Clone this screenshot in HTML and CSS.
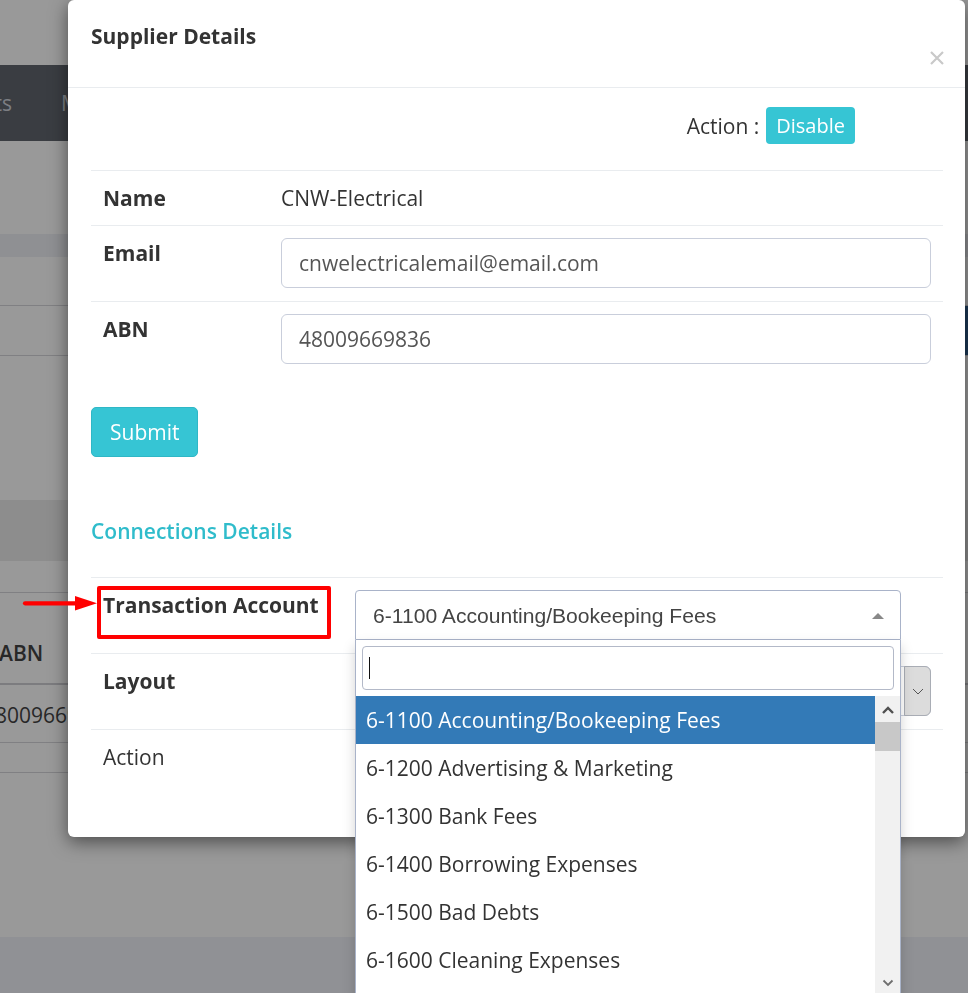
FILE: index.html
```html
<!DOCTYPE html>
<html lang="en">
<head>
<meta charset="utf-8">
<title>Supplier Details</title>
<link rel="stylesheet" href="styles.css">
</head>
<body>
<div class="page">
  <div class="bg-top"></div>
  <nav class="bg-nav">
    <div class="bg-nav-edge"><span class="bg-nav-item">Contacts</span></div>
    <span class="bg-nav-item bg-nav-next">More</span>
  </nav>
  <div class="bg-gap-a"></div>
  <div class="bg-band"></div>
  <div class="bg-gap-b"></div>
  <div class="bg-row"><span class="bg-btn"></span></div>
  <div class="bg-gap-c"></div>
  <div class="bg-card-head"></div>
  <div class="bg-gap-d"></div>
  <div class="bg-table">
    <div class="bg-th">ABN</div>
    <div class="bg-td">48009669836</div>
    <div class="bg-td-empty"></div>
  </div>
  <div class="bg-gap-e"></div>
  <div class="bg-footer"></div>
</div>

<div class="backdrop"></div>

<div class="modal">
  <div class="modal-header">
    <h5 class="modal-title">Supplier Details</h5>
    <svg class="modal-close" width="14" height="14" viewBox="0 0 14 14"><path d="M1 1L13 13M13 1L1 13" stroke="#c9c9c9" stroke-width="2.2" fill="none"/></svg>
  </div>
  <div class="modal-body">
    <div class="action-row">
      <span class="action-label">Action :</span>
      <span class="btn-disable">Disable</span>
    </div>

    <div class="detail-table">
      <div class="detail-row">
        <div class="cell cell-label">Name</div>
        <div class="cell">CNW-Electrical</div>
      </div>
      <div class="detail-row row-field">
        <div class="cell cell-label">Email</div>
        <div class="cell"><div class="form-input">cnwelectricalemail@email.com</div></div>
      </div>
      <div class="detail-row row-field">
        <div class="cell cell-label">ABN</div>
        <div class="cell"><div class="form-input">48009669836</div></div>
      </div>
    </div>

    <div class="btn-submit">Submit</div>

    <h5 class="section-title">Connections Details</h5>

    <div class="detail-table conn-table">
      <div class="detail-row row-field">
        <div class="cell cell-label"><span class="marked">Transaction Account</span></div>
        <div class="cell">
          <div class="s2">
            <div class="s2-selection">
              <span>6-1100 Accounting/Bookeeping Fees</span>
              <span class="s2-arrow"></span>
            </div>
            <div class="s2-dropdown">
              <div class="s2-search"><div class="s2-search-box"><span class="s2-caret"></span></div></div>
              <div class="s2-results">
                <ul class="s2-options">
                  <li class="s2-option is-highlighted">6-1100 Accounting/Bookeeping Fees</li>
                  <li class="s2-option">6-1200 Advertising &amp; Marketing</li>
                  <li class="s2-option">6-1300 Bank Fees</li>
                  <li class="s2-option">6-1400 Borrowing Expenses</li>
                  <li class="s2-option">6-1500 Bad Debts</li>
                  <li class="s2-option">6-1600 Cleaning Expenses</li>
                </ul>
                <div class="s2-scroll">
                  <div class="s2-scroll-btn s2-up"><svg width="12" height="8" viewBox="0 0 12 8"><path d="M1 7L6 2L11 7" stroke="#505050" stroke-width="2.4" fill="none"/></svg></div>
                  <div class="s2-thumb"></div>
                  <div class="s2-track"></div>
                  <div class="s2-scroll-btn"><svg width="12" height="8" viewBox="0 0 12 8"><path d="M1.5 1.5L6 6L10.5 1.5" stroke="#6e6e6e" stroke-width="1.8" fill="none"/></svg></div>
                </div>
              </div>
            </div>
          </div>
        </div>
      </div>
      <div class="detail-row row-field">
        <div class="cell cell-label">Layout</div>
        <div class="cell">
          <div class="layout-select"><span class="layout-arrow"><svg width="12" height="7" viewBox="0 0 12 7"><path d="M1 1L6 6L11 1" stroke="#555" stroke-width="1" fill="none"/></svg></span></div>
        </div>
      </div>
      <div class="detail-row">
        <div class="cell">Action</div>
        <div class="cell"></div>
      </div>
    </div>
  </div>
</div>

<svg class="annot-arrow" width="100" height="26" viewBox="0 0 100 26">
  <path d="M25 13.3H78" stroke="#ff0000" stroke-width="4.2" stroke-linecap="round" fill="none"/>
  <path d="M75 6L97 13.3L75 20.6Z" fill="#ff0000"/>
</svg>
</body>
</html>
```

FILE: styles.css
```css
*, *::before, *::after { box-sizing: border-box; }

html, body {
  margin: 0;
  padding: 0;
  width: 968px;
  height: 993px;
  overflow: hidden;
}

body {
  position: relative;
  font-family: "Open Sans", "Liberation Sans", sans-serif;
  font-size: 21px;
  line-height: 30px;
  color: #333;
  background: #fff;
}

/* ---------- background application page ---------- */
.page { width: 968px; }
.bg-top { height: 65px; }
.bg-nav {
  height: 76px;
  background: #62666f;
  display: flex;
  align-items: center;
  color: #cfd3da;
}
.bg-nav-edge {
  width: 12px;
  display: flex;
  justify-content: flex-end;
  white-space: nowrap;
}
.bg-nav-item { white-space: nowrap; }
.bg-nav-next { margin-left: 49px; }
.bg-gap-a { height: 93px; }
.bg-band { height: 23px; background: #eef0f5; }
.bg-gap-b { height: 48px; }
.bg-row {
  height: 51px;
  border-top: 1px solid #d6d6da;
  border-bottom: 1px solid #d6d6da;
  display: flex;
  justify-content: flex-end;
}
.bg-btn { width: 10px; background: #2f5f8f; }
.bg-gap-c { height: 144px; }
.bg-card-head { height: 61px; background: #ececec; }
.bg-gap-d { height: 31px; }
.bg-table { margin-left: -17px; }
.bg-th {
  height: 93px;
  border-top: 1px solid #d6d6da;
  border-bottom: 2px solid #cfcfd4;
  padding: 0 0 15px 16px;
  display: flex;
  align-items: flex-end;
  font-weight: 600;
  color: #444;
}
.bg-td {
  height: 58px;
  border-bottom: 1px solid #d6d6da;
  padding-top: 15px;
  color: #444;
}
.bg-td-empty { height: 30px; border-bottom: 1px solid #d6d6da; }
.bg-gap-e { height: 164px; }
.bg-footer { height: 56px; background: #f0f2f8; }

/* ---------- modal ---------- */
.backdrop {
  position: fixed;
  inset: 0;
  background: rgba(0, 0, 0, 0.4);
}

.modal {
  position: absolute;
  top: 0;
  left: 68px;
  width: 897px;
  background: #fff;
  border-radius: 6px;
  box-shadow: 0 5px 18px rgba(0, 0, 0, 0.5);
}

.modal-header {
  height: 88px;
  padding: 20px 21px 0 23px;
  border-bottom: 1px solid #e9ecef;
  display: flex;
  justify-content: space-between;
  align-items: flex-start;
}
.modal-title {
  margin: 0;
  font-size: 21px;
  line-height: 33px;
  font-weight: 700;
  color: #333;
}
.modal-close { margin-top: 31px; display: block; }

.modal-body { padding: 0 22px 53px 23px; }

.action-row {
  height: 82px;
  padding: 19px 88px 26px 0;
  display: flex;
  justify-content: flex-end;
  align-items: center;
}
.action-label { margin-right: 7px; }
.btn-disable {
  background: #36c5d4;
  color: #fff;
  border-radius: 4px;
  padding: 3px 10px;
  font-size: 20px;
  line-height: 31px;
}

.detail-row {
  display: grid;
  grid-template-columns: 178px 1fr;
  border-top: 1px solid #e9ecef;
}
.conn-table .detail-row { grid-template-columns: 252px 1fr; }
.cell { padding: 12px; }
.row-field .cell { padding-bottom: 13px; }
.cell-label { font-weight: 700; }

.form-input {
  height: 50px;
  border: 1px solid #c9cedb;
  border-radius: 6px;
  padding: 0 17px;
  line-height: 48px;
  color: #555;
}

.btn-submit {
  display: inline-block;
  margin-top: 30px;
  height: 50px;
  padding: 9px 18px;
  background: #36c5d4;
  border: 1px solid #2fb7c6;
  border-radius: 5px;
  color: #fff;
}

.section-title {
  margin: 58px 0 29px;
  font-size: 21px;
  line-height: 33px;
  font-weight: 600;
  color: #2fbccb;
}

/* red annotation box around the label */
.marked { position: relative; display: inline-block; }
.marked::after {
  content: "";
  position: absolute;
  left: -6px;
  top: -4px;
  width: 234px;
  height: 53px;
  border: 4px solid #ff0000;
  border-radius: 2px;
}

/* ---------- select2 style dropdown ---------- */
.s2 { position: relative; width: 546px; }
.s2-selection {
  height: 50px;
  border: 1px solid #a9b3c9;
  border-radius: 4px 4px 0 0;
  padding: 1px 16px 0 17px;
  display: flex;
  justify-content: space-between;
  align-items: center;
  font-family: "Liberation Sans", Arial, sans-serif;
  font-size: 21.1px;
  line-height: 47px;
  color: #444;
}
.s2-arrow {
  width: 0;
  height: 0;
  border-left: 6.5px solid transparent;
  border-right: 6.5px solid transparent;
  border-bottom: 6px solid #888;
}
.s2-dropdown {
  position: absolute;
  top: 50px;
  left: 0;
  width: 546px;
  background: #fff;
  border: 1px solid #a9b3c9;
  border-top: none;
  box-shadow: 0 6px 12px rgba(0, 0, 0, 0.175);
  z-index: 5;
}
.s2-search { padding: 6px; }
.s2-search-box {
  height: 44px;
  border: 1px solid #b3b9c8;
  border-radius: 4px;
  padding-left: 6px;
  display: flex;
  align-items: center;
}
.s2-caret { width: 1px; height: 22px; background: #111; }

.s2-results { display: flex; height: 300px; overflow: hidden; }
.s2-options {
  flex: 1;
  list-style: none;
  margin: 0;
  padding: 0;
}
.s2-option {
  padding: 9px 10px;
  line-height: 30px;
  color: #333;
  white-space: nowrap;
}
.s2-option.is-highlighted { background: #337ab7; color: #fff; }

.s2-scroll {
  width: 25px;
  background: #f1f1f1;
  display: flex;
  flex-direction: column;
}
.s2-scroll-btn {
  height: 26px;
  display: flex;
  align-items: center;
  justify-content: center;
}
.s2-up { padding-top: 2px; }
.s2-thumb { height: 29px; background: #c8c8c8; }
.s2-track { flex: 1; }

/* ---------- layout select ---------- */
.layout-select {
  height: 50px;
  border: 1px solid #c9cedb;
  border-radius: 6px;
  display: flex;
  justify-content: flex-end;
  padding: 0;
}
.layout-arrow {
  width: 27px;
  margin: -1px -1px -1px 0;
  background: #dcdcdc;
  border: 1px solid #a9adb5;
  border-radius: 0 6px 6px 0;
  display: flex;
  align-items: center;
  justify-content: center;
}

/* ---------- annotation arrow ---------- */
.annot-arrow {
  position: absolute;
  left: 0;
  top: 590px;
}
```
